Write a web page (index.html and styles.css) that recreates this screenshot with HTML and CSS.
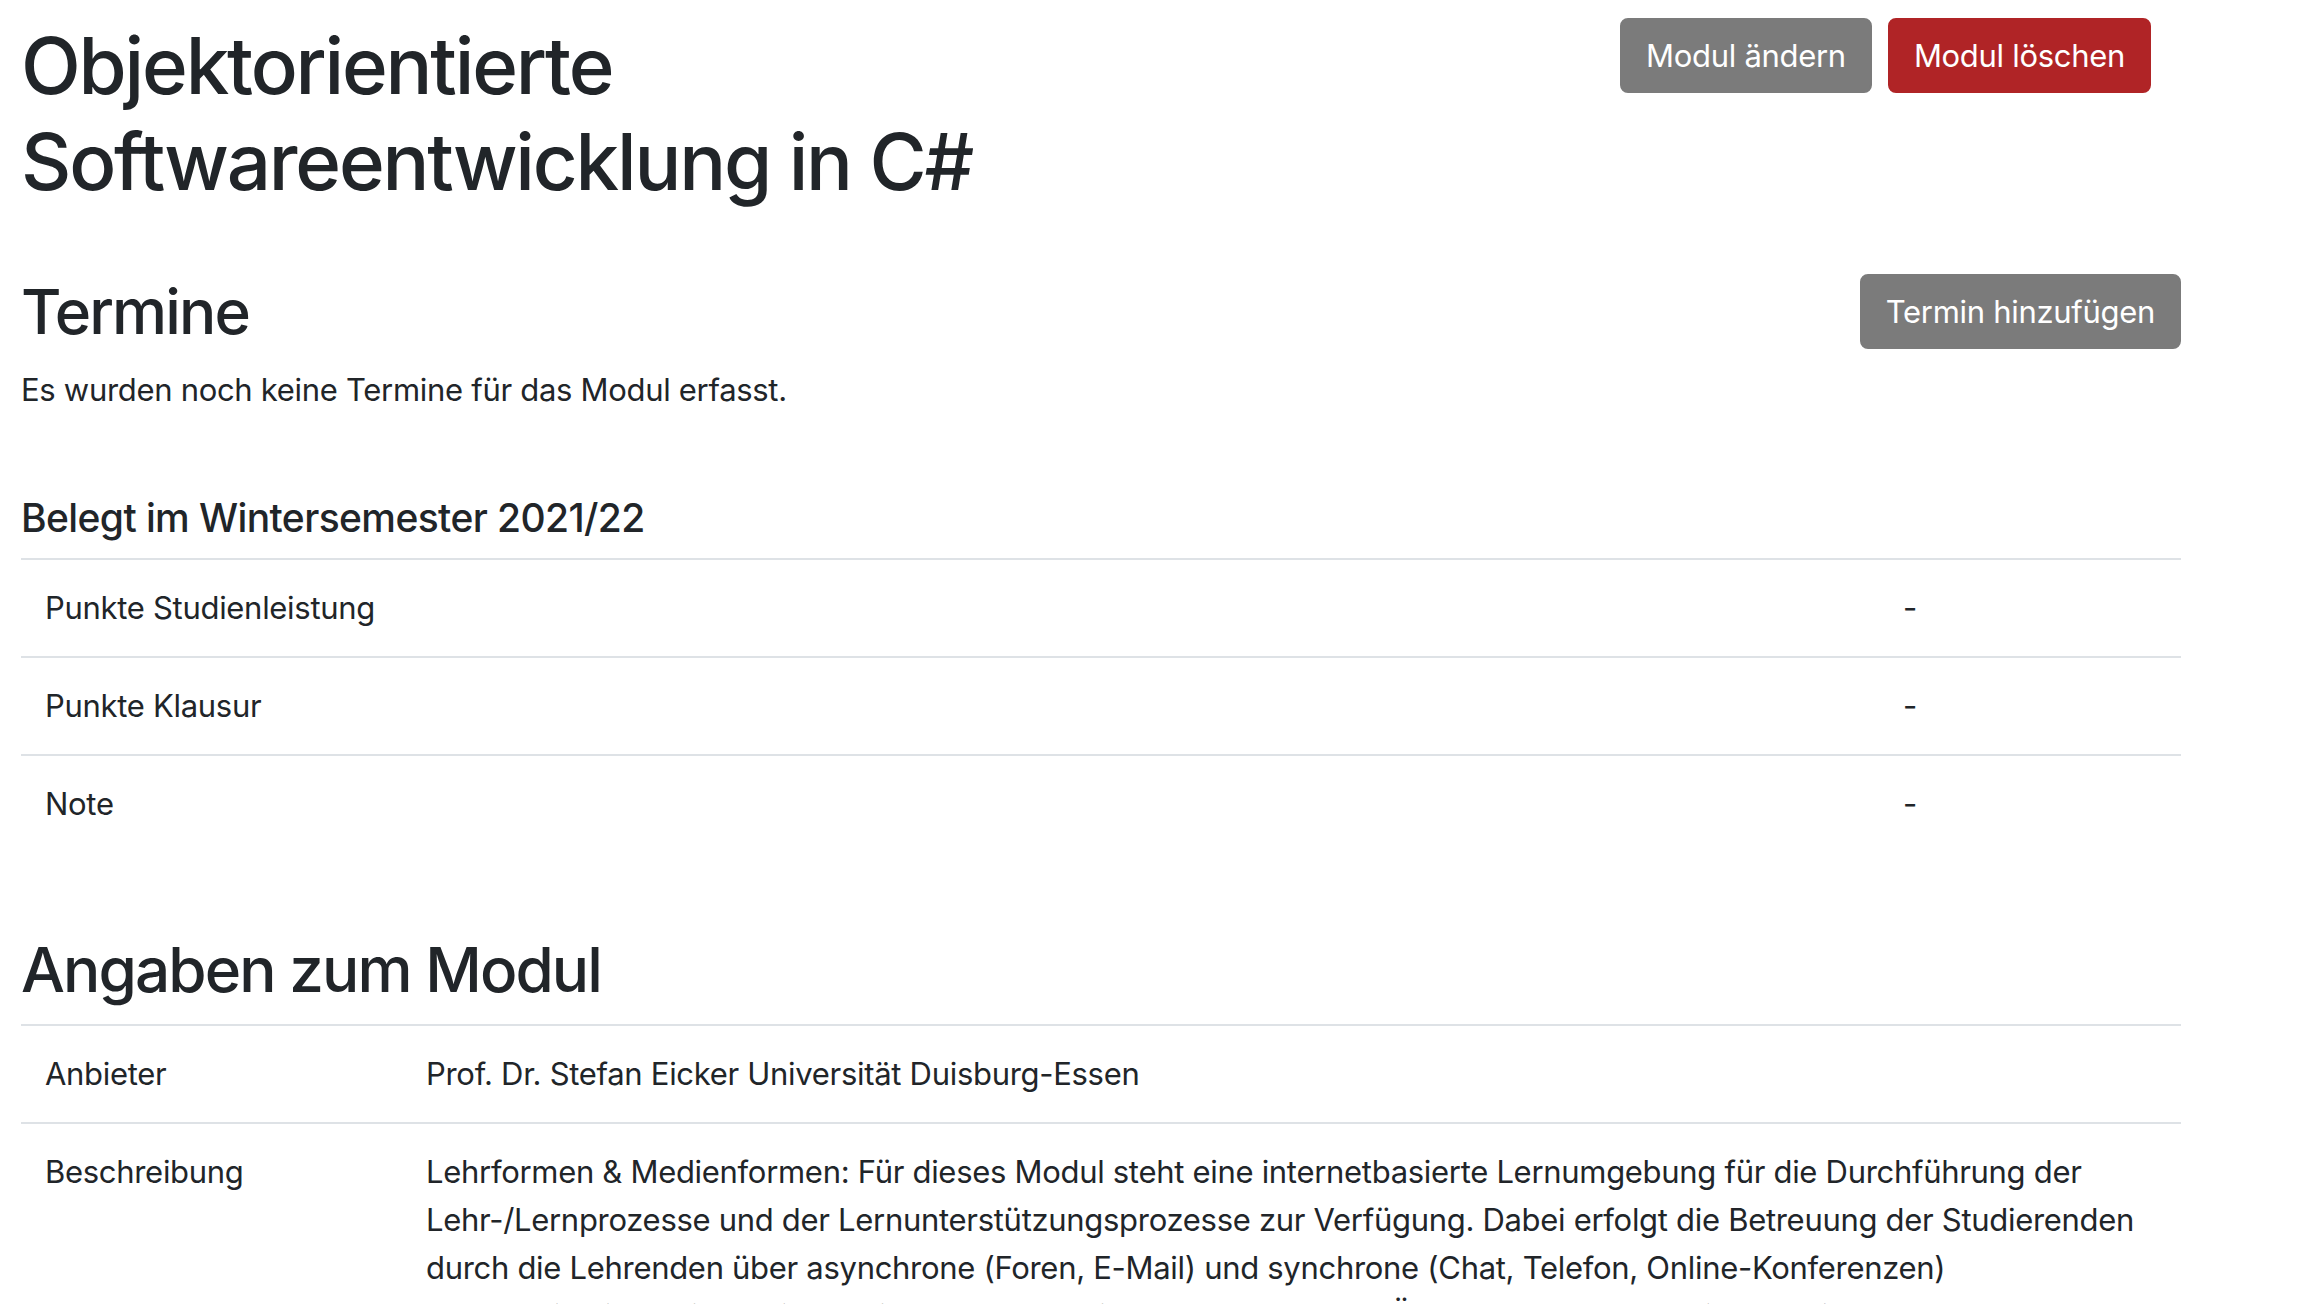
FILE: index.html
```html
<!DOCTYPE html>
<html lang="de">
<head>
<meta charset="utf-8">
<title>Objektorientierte Softwareentwicklung in C#</title>
<link rel="stylesheet" href="styles.css">
</head>
<body>
<main class="page">
  <header class="module-head">
    <h1 class="title">Objektorientierte Softwareentwicklung in C#</h1>
    <div class="head-actions">
      <button class="btn btn-gray" type="button">Modul ändern</button>
      <button class="btn btn-red" type="button">Modul löschen</button>
    </div>
  </header>

  <section class="section">
    <div class="section-head">
      <h2 class="h2">Termine</h2>
      <button class="btn btn-gray" type="button">Termin hinzufügen</button>
    </div>
    <p class="text">Es wurden noch keine Termine für das Modul erfasst.</p>
  </section>

  <section class="section">
    <h5 class="h5">Belegt im Wintersemester 2021/22</h5>
    <div class="table table-belegt">
      <div class="row"><div class="cell">Punkte Studienleistung</div><div class="cell">-</div></div>
      <div class="row"><div class="cell">Punkte Klausur</div><div class="cell">-</div></div>
      <div class="row"><div class="cell">Note</div><div class="cell">-</div></div>
    </div>
  </section>

  <section class="section">
    <h2 class="h2">Angaben zum Modul</h2>
    <div class="table table-info">
      <div class="row"><div class="cell">Anbieter</div><div class="cell">Prof. Dr. Stefan Eicker Universität Duisburg-Essen</div></div>
      <div class="row"><div class="cell">Beschreibung</div><div class="cell">Lehrformen &amp; Medienformen: Für dieses Modul steht eine internetbasierte Lernumgebung für die Durchführung der Lehr-/Lernprozesse und der Lernunterstützungsprozesse zur Verfügung. Dabei erfolgt die Betreuung der Studierenden durch die Lehrenden über asynchrone (Foren, E-Mail) und synchrone (Chat, Telefon, Online-Konferenzen) Kommunikationsmittel. Die Lerninhalte werden in Form von Texten, Übungen und Fallstudien bereitgestellt.</div></div>
    </div>
  </section>
</main>
</body>
</html>
```

FILE: styles.css
```css
* { box-sizing: border-box; }

html, body {
  margin: 0;
  padding: 0;
  background: #ffffff;
}

body {
  font-family: Inter, "Noto Sans", "Liberation Sans", sans-serif;
  font-size: 31px;
  line-height: 48px;
  letter-spacing: -0.3px;
  color: #212529;
}

.page {
  padding: 18px 137px 0 21px;
}

.module-head {
  display: grid;
  grid-template-columns: 1fr 1fr;
}

.title {
  margin: 0 0 16px 0;
  font-size: 78px;
  line-height: 96px;
  letter-spacing: -2.2px;
  font-weight: 500;
  max-width: 1050px;
}

.head-actions {
  display: flex;
  justify-content: flex-end;
  align-items: flex-start;
  gap: 16px;
  padding-right: 30px;
}

.btn {
  font-family: inherit;
  font-size: 31px;
  line-height: 48px;
  letter-spacing: -0.3px;
  font-weight: 400;
  color: #ffffff;
  border: 2px solid transparent;
  border-radius: 8px;
  padding: 11.5px 24px;
  cursor: pointer;
}

.btn-gray {
  background: #7b7b7b;
  border-color: #7b7b7b;
}

.btn-red {
  background: #b02426;
  border-color: #b02426;
}

.section {
  display: flow-root;
  margin-top: 48px;
}

.section-head {
  display: flex;
  justify-content: space-between;
  align-items: flex-start;
}

.h2 {
  margin: 0 0 16px 0;
  font-size: 62px;
  line-height: 76px;
  letter-spacing: -1.9px;
  font-weight: 500;
}

.h5 {
  margin: 0 0 16px 0;
  font-size: 39px;
  line-height: 48px;
  letter-spacing: -0.6px;
  font-weight: 500;
}

.text {
  margin: 0 0 32px 0;
}

.table {
  margin-bottom: 32px;
}

.row {
  display: grid;
  border-top: 2px solid #dee2e6;
}

.table-belegt .row {
  grid-template-columns: 1fr 302px;
}

.table-info .row {
  grid-template-columns: 381px 1fr;
}

.cell {
  padding: 24px;
}
```
